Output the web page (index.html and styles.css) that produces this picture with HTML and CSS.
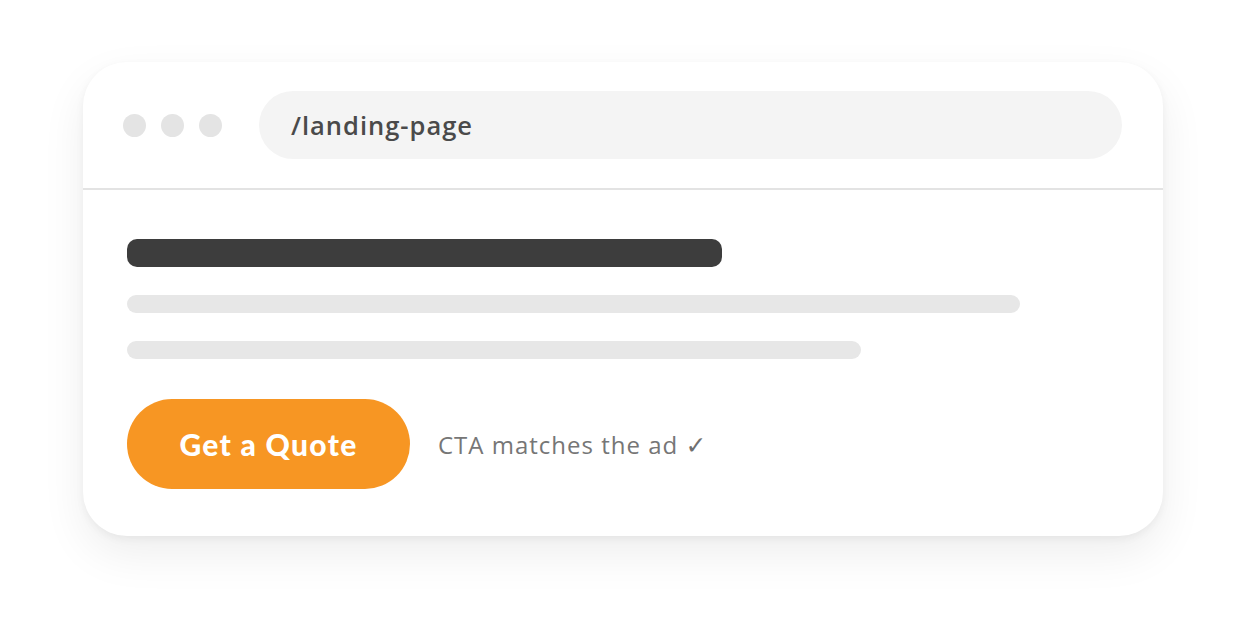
FILE: index.html
```html
<!DOCTYPE html>
<html lang="en">
<head>
<meta charset="utf-8">
<title>Landing page</title>
<link rel="stylesheet" href="styles.css">
</head>
<body>
<div class="window">
  <div class="chrome">
    <div class="dots">
      <span class="dot"></span><span class="dot"></span><span class="dot"></span>
    </div>
    <div class="url">/landing-page</div>
  </div>
  <div class="content">
    <div class="bar bar-title"></div>
    <div class="bar bar-line bar-long"></div>
    <div class="bar bar-line bar-mid"></div>
    <div class="cta-row">
      <div class="cta">Get a Quote</div>
      <div class="note">CTA matches the ad <span class="check">✓</span></div>
    </div>
  </div>
</div>
</body>
</html>
```
FILE: styles.css
```css
html, body {
  margin: 0;
  padding: 0;
  background: #ffffff;
}
body {
  width: 1246px;
  height: 640px;
  overflow: hidden;
  font-family: "Open Sans", "Liberation Sans", sans-serif;
}
.window {
  margin: 62px 0 0 83px;
  width: 1080px;
  height: 474px;
  background: #ffffff;
  border-radius: 44px;
  box-shadow: 0 3px 8px rgba(0,0,0,0.05), 0 18px 45px rgba(0,0,0,0.07);
  display: flex;
  flex-direction: column;
  overflow: hidden;
}
.chrome {
  height: 126px;
  border-bottom: 2px solid #e3e3e3;
  display: flex;
  align-items: center;
  padding: 0 41px 0 40px;
  gap: 37px;
}
.dots {
  display: flex;
  gap: 15px;
}
.dot {
  width: 23px;
  height: 23px;
  border-radius: 50%;
  background: #e4e4e4;
}
.url {
  flex: 1;
  height: 68px;
  border-radius: 34px;
  background: #f4f4f4;
  display: flex;
  align-items: center;
  padding-left: 32px;
  font-size: 25.5px;
  font-weight: 600;
  letter-spacing: 1px;
  color: #4a4a4a;
}
.content {
  padding: 49px 0 0 44px;
  display: flex;
  flex-direction: column;
}
.bar {
  border-radius: 10px;
}
.bar-title {
  width: 595px;
  height: 28px;
  background: #3d3d3d;
}
.bar-line {
  height: 18px;
  background: #e7e7e7;
  border-radius: 9px;
  margin-top: 28px;
}
.bar-long { width: 893px; }
.bar-mid { width: 734px; }
.cta-row {
  margin-top: 40px;
  display: flex;
  align-items: center;
  gap: 28px;
}
.cta {
  width: 283px;
  height: 90px;
  border-radius: 45px;
  background: #f79623;
  color: #ffffff;
  display: flex;
  align-items: center;
  justify-content: center;
  font-family: "Lato", "Liberation Sans", sans-serif;
  font-weight: 900;
  font-size: 30px;
  letter-spacing: 1.3px;
}
.note {
  font-size: 24px;
  letter-spacing: 1px;
  color: #767676;
}
.check {
  font-family: "DejaVu Sans", sans-serif;
  font-weight: bold;
  font-size: 25px;
  color: #707070;
}
```
